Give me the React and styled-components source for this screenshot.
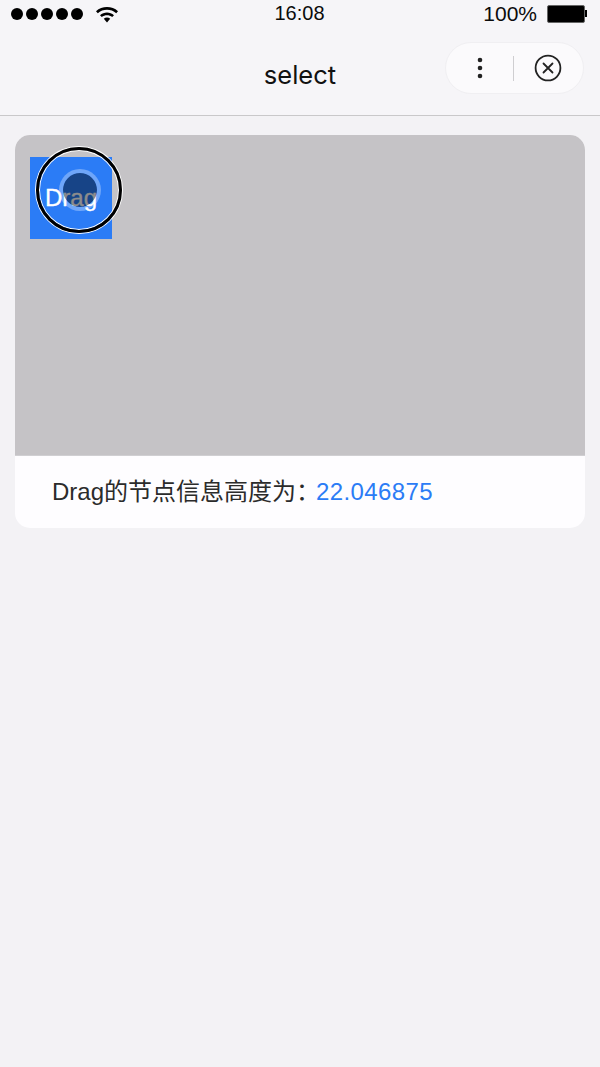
import React from "react";
import styled, { createGlobalStyle } from "styled-components";

const Global = createGlobalStyle`
  html, body { margin: 0; padding: 0; background: #f3f2f5; }
  body { font-family: "Liberation Sans", "Noto Sans CJK SC", sans-serif; }
`;

const Page = styled.div`
  width: 600px;
  height: 1067px;
  overflow: hidden;
  background: #f3f2f5;
  display: flex;
  flex-direction: column;
`;

const Header = styled.header`
  height: 116px;
  flex: none;
  box-sizing: border-box;
  background: #f6f5f8;
  border-bottom: 1px solid #c9c8ca;
  display: flex;
  flex-direction: column;
`;

const StatusBar = styled.div`
  height: 27px;
  flex: none;
  padding: 0 12px 0 11px;
  display: grid;
  grid-template-columns: 1fr auto 1fr;
  align-items: center;
  color: #0b0b0b;
  font-size: 20px;
`;

const StatusLeft = styled.div`
  display: flex;
  align-items: center;
`;

const Dots = styled.div`
  display: flex;
  gap: 3px;
  margin-right: 12px;
`;

const Dot = styled.span`
  width: 12px;
  height: 12px;
  border-radius: 50%;
  background: #000;
`;

const StatusRight = styled.div`
  display: flex;
  justify-content: flex-end;
  align-items: center;
  gap: 10px;
  margin-right: 1px;
`;

const Percent = styled.span`
  font-size: 21px;
`;

const Battery = styled.div`
  display: flex;
  align-items: center;
`;

const BatteryBody = styled.div`
  width: 38px;
  height: 18px;
  box-sizing: border-box;
  border: 1px solid #666;
  border-radius: 2px;
  background: #000;
`;

const BatteryTip = styled.div`
  width: 2px;
  height: 7px;
  background: #000;
`;

const NavRow = styled.div`
  flex: 1;
  position: relative;
  display: flex;
  align-items: center;
  justify-content: center;
`;

const Title = styled.div`
  font-family: "Inter", "Liberation Sans", sans-serif;
  font-size: 25.500px;
  color: #111;
  margin-top: 7px;
`;

const Capsule = styled.div`
  position: absolute;
  right: 16px;
  top: 15px;
  width: 139px;
  height: 52px;
  box-sizing: border-box;
  border-radius: 26px;
  background: #fbfafc;
  border: 1px solid #f0eff2;
  display: flex;
  align-items: center;
  padding-right: 2px;
`;

const CapsuleCell = styled.div`
  flex: 1;
  display: flex;
  align-items: center;
  justify-content: center;
`;

const Divider = styled.div`
  width: 1px;
  height: 25px;
  background: #cfced1;
`;

const Content = styled.main`
  padding: 19px 15px;
`;

const Card = styled.section`
  height: 393px;
  border-radius: 15px;
  overflow: hidden;
  background: #fefdff;
  display: flex;
  flex-direction: column;
`;

const Stage = styled.div`
  height: 321px;
  flex: none;
  box-sizing: border-box;
  background: #c5c3c6;
  border-bottom: 1px solid #d0cfd2;
  padding: 22px 15px;
  position: relative;
`;

const DragBox = styled.div`
  width: 82px;
  height: 82px;
  background: #2b7cf6;
  color: #fff;
  font-size: 24px;
  -webkit-text-stroke: 0.3px #fff;
  display: flex;
  align-items: center;
  justify-content: center;
`;

const TouchRing = styled.div`
  position: absolute;
  left: 21px;
  top: 12px;
  width: 86px;
  height: 86px;
  box-sizing: border-box;
  border-radius: 50%;
  border: 3px solid #000;
  box-shadow: 0 0 0 1px #fff, inset 0 0 0 1px #fff;
`;

const TouchDot = styled.div`
  position: absolute;
  left: 44px;
  top: 34px;
  width: 42px;
  height: 42px;
  box-sizing: border-box;
  border-radius: 50%;
  background: rgba(0, 0, 0, 0.45);
  background-clip: padding-box;
  border: 4px solid rgba(255, 255, 255, 0.32);
`;

const Info = styled.div`
  flex: 1;
  display: flex;
  align-items: center;
  padding: 0 0 6px 37px;
  font-size: 24px;
  color: #2b2b2b;
`;

const InfoLine = styled.div`
  white-space: nowrap;
`;

const Value = styled.span`
  color: #2b7cf6;
  letter-spacing: 0.4px;
  margin-left: -4px;
`;

export default function App() {
  return (
    <Page>
      <Global />
      <Header>
        <StatusBar>
          <StatusLeft>
            <Dots>
              {[0, 1, 2, 3, 4].map((i) => (
                <Dot key={i} />
              ))}
            </Dots>
            <svg width="24" height="18" viewBox="0 0 24 18">
              <path d="M1 6.200C7 .6 17 .6 23 6.200l-1.800 2C16.200 3.600 7.800 3.600 2.800 8.200z" fill="#000" />
              <path d="M5 10.200c4-3.600 10-3.600 14 0l-1.800 1.900c-3-2.500-7.400-2.500-10.400 0z" fill="#000" />
              <path d="M8.800 13.700c1.900-1.500 4.500-1.500 6.400 0L12 17.500z" fill="#000" />
            </svg>
          </StatusLeft>
          <div>16:08</div>
          <StatusRight>
            <Percent>100%</Percent>
            <Battery>
              <BatteryBody />
              <BatteryTip />
            </Battery>
          </StatusRight>
        </StatusBar>
        <NavRow>
          <Title>select</Title>
          <Capsule>
            <CapsuleCell>
              <svg width="6" height="22" viewBox="0 0 6 22">
                <circle cx="3" cy="3" r="2.300" fill="#222" />
                <circle cx="3" cy="11" r="2.300" fill="#222" />
                <circle cx="3" cy="19" r="2.300" fill="#222" />
              </svg>
            </CapsuleCell>
            <Divider />
            <CapsuleCell>
              <svg width="28" height="28" viewBox="0 0 28 28" fill="none" stroke="#222" strokeWidth="1.800">
                <circle cx="14" cy="14" r="12.400" />
                <path d="M9.500 9.500l9 9M18.500 9.500l-9 9" strokeLinecap="round" />
              </svg>
            </CapsuleCell>
          </Capsule>
        </NavRow>
      </Header>
      <Content>
        <Card>
          <Stage>
            <DragBox>Drag</DragBox>
            <TouchRing />
            <TouchDot />
          </Stage>
          <Info>
            <InfoLine>
              Drag的节点信息高度为：<Value>22.046875</Value>
            </InfoLine>
          </Info>
        </Card>
      </Content>
    </Page>
  );
}
